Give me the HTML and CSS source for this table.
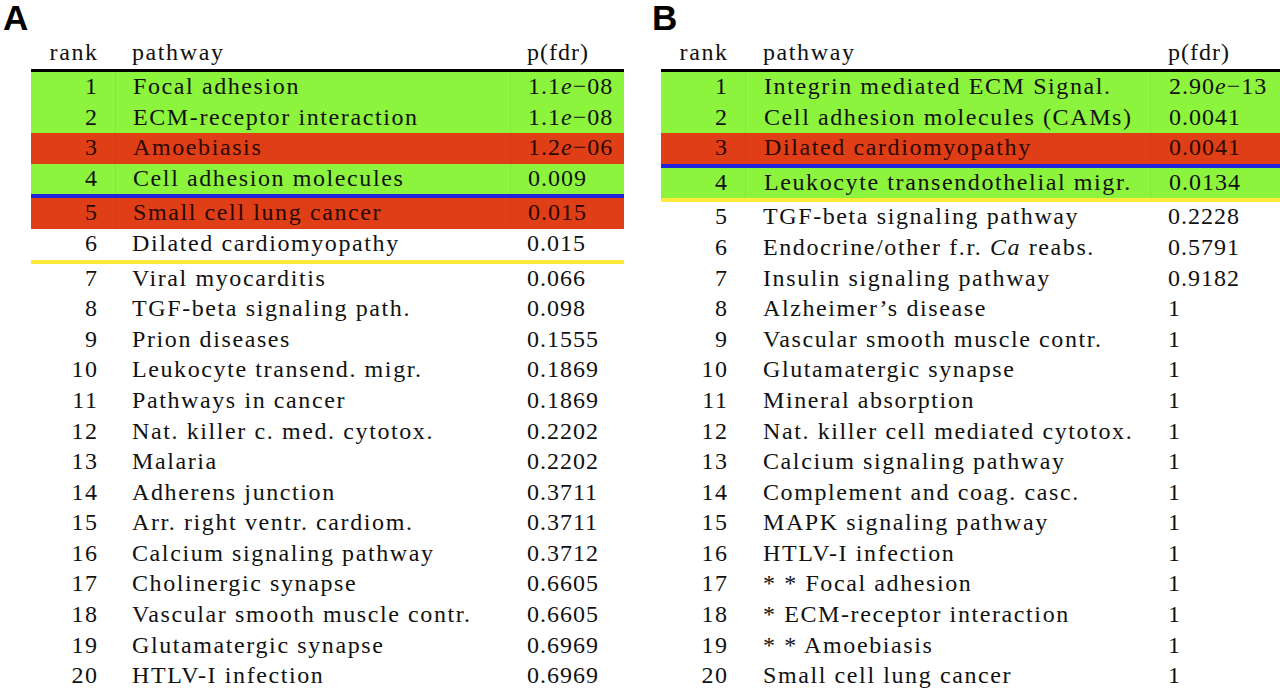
FILE: index.html
```html
<!DOCTYPE html>
<html>
<head>
<meta charset="utf-8">
<link rel="stylesheet" href="styles.css">
</head>
<body>
<div class="figure">
  <section class="panel panel-a">
    <div class="label">A</div>
    <div class="table">
      <div class="row head"><div class="c-rank">rank</div><div class="c-path">pathway</div><div class="c-p">p(fdr)</div></div>
      <div class="row green"><div class="c-rank">1</div><div class="c-path">Focal adhesion</div><div class="c-p">1.1<i>e</i>−08</div></div>
      <div class="row green"><div class="c-rank">2</div><div class="c-path">ECM-receptor interaction</div><div class="c-p">1.1<i>e</i>−08</div></div>
      <div class="row red"><div class="c-rank">3</div><div class="c-path">Amoebiasis</div><div class="c-p">1.2<i>e</i>−06</div></div>
      <div class="row green"><div class="c-rank">4</div><div class="c-path">Cell adhesion molecules</div><div class="c-p">0.009</div></div>
      <div class="sep blue"></div>
      <div class="row red"><div class="c-rank">5</div><div class="c-path">Small cell lung cancer</div><div class="c-p">0.015</div></div>
      <div class="row"><div class="c-rank">6</div><div class="c-path">Dilated cardiomyopathy</div><div class="c-p">0.015</div></div>
      <div class="sep yellow"></div>
      <div class="row"><div class="c-rank">7</div><div class="c-path">Viral myocarditis</div><div class="c-p">0.066</div></div>
      <div class="row"><div class="c-rank">8</div><div class="c-path">TGF-beta signaling path.</div><div class="c-p">0.098</div></div>
      <div class="row"><div class="c-rank">9</div><div class="c-path">Prion diseases</div><div class="c-p">0.1555</div></div>
      <div class="row"><div class="c-rank">10</div><div class="c-path">Leukocyte transend. migr.</div><div class="c-p">0.1869</div></div>
      <div class="row"><div class="c-rank">11</div><div class="c-path">Pathways in cancer</div><div class="c-p">0.1869</div></div>
      <div class="row"><div class="c-rank">12</div><div class="c-path">Nat. killer c. med. cytotox.</div><div class="c-p">0.2202</div></div>
      <div class="row"><div class="c-rank">13</div><div class="c-path">Malaria</div><div class="c-p">0.2202</div></div>
      <div class="row"><div class="c-rank">14</div><div class="c-path">Adherens junction</div><div class="c-p">0.3711</div></div>
      <div class="row"><div class="c-rank">15</div><div class="c-path">Arr. right ventr. cardiom.</div><div class="c-p">0.3711</div></div>
      <div class="row"><div class="c-rank">16</div><div class="c-path">Calcium signaling pathway</div><div class="c-p">0.3712</div></div>
      <div class="row"><div class="c-rank">17</div><div class="c-path">Cholinergic synapse</div><div class="c-p">0.6605</div></div>
      <div class="row"><div class="c-rank">18</div><div class="c-path">Vascular smooth muscle contr.</div><div class="c-p">0.6605</div></div>
      <div class="row"><div class="c-rank">19</div><div class="c-path">Glutamatergic synapse</div><div class="c-p">0.6969</div></div>
      <div class="row"><div class="c-rank">20</div><div class="c-path">HTLV-I infection</div><div class="c-p">0.6969</div></div>
    </div>
  </section>
  <section class="panel panel-b">
    <div class="label">B</div>
    <div class="table">
      <div class="row head"><div class="c-rank">rank</div><div class="c-path">pathway</div><div class="c-p">p(fdr)</div></div>
      <div class="row green"><div class="c-rank">1</div><div class="c-path">Integrin mediated ECM Signal.</div><div class="c-p">2.90<i>e</i>−13</div></div>
      <div class="row green"><div class="c-rank">2</div><div class="c-path">Cell adhesion molecules (CAMs)</div><div class="c-p">0.0041</div></div>
      <div class="row red"><div class="c-rank">3</div><div class="c-path">Dilated cardiomyopathy</div><div class="c-p">0.0041</div></div>
      <div class="sep blue"></div>
      <div class="row green"><div class="c-rank">4</div><div class="c-path">Leukocyte transendothelial migr.</div><div class="c-p">0.0134</div></div>
      <div class="sep yellow"></div>
      <div class="row"><div class="c-rank">5</div><div class="c-path">TGF-beta signaling pathway</div><div class="c-p">0.2228</div></div>
      <div class="row"><div class="c-rank">6</div><div class="c-path">Endocrine/other f.r. <i>Ca</i> reabs.</div><div class="c-p">0.5791</div></div>
      <div class="row"><div class="c-rank">7</div><div class="c-path">Insulin signaling pathway</div><div class="c-p">0.9182</div></div>
      <div class="row"><div class="c-rank">8</div><div class="c-path">Alzheimer’s disease</div><div class="c-p">1</div></div>
      <div class="row"><div class="c-rank">9</div><div class="c-path">Vascular smooth muscle contr.</div><div class="c-p">1</div></div>
      <div class="row"><div class="c-rank">10</div><div class="c-path">Glutamatergic synapse</div><div class="c-p">1</div></div>
      <div class="row"><div class="c-rank">11</div><div class="c-path">Mineral absorption</div><div class="c-p">1</div></div>
      <div class="row"><div class="c-rank">12</div><div class="c-path">Nat. killer cell mediated cytotox.</div><div class="c-p">1</div></div>
      <div class="row"><div class="c-rank">13</div><div class="c-path">Calcium signaling pathway</div><div class="c-p">1</div></div>
      <div class="row"><div class="c-rank">14</div><div class="c-path">Complement and coag. casc.</div><div class="c-p">1</div></div>
      <div class="row"><div class="c-rank">15</div><div class="c-path">MAPK signaling pathway</div><div class="c-p">1</div></div>
      <div class="row"><div class="c-rank">16</div><div class="c-path">HTLV-I infection</div><div class="c-p">1</div></div>
      <div class="row"><div class="c-rank">17</div><div class="c-path">* * Focal adhesion</div><div class="c-p">1</div></div>
      <div class="row"><div class="c-rank">18</div><div class="c-path">* ECM-receptor interaction</div><div class="c-p">1</div></div>
      <div class="row"><div class="c-rank">19</div><div class="c-path">* * Amoebiasis</div><div class="c-p">1</div></div>
      <div class="row"><div class="c-rank">20</div><div class="c-path">Small cell lung cancer</div><div class="c-p">1</div></div>
    </div>
  </section>
</div>
</body>
</html>
```

FILE: styles.css
```css
html, body {
  margin: 0;
  padding: 0;
  background: #ffffff;
}

body {
  width: 1280px;
  height: 692px;
  overflow: hidden;
  color: #111111;
  font-family: "Liberation Serif", "Times New Roman", serif;
}

.figure {
  display: flex;
  align-items: flex-start;
}

.panel {
  display: flex;
  flex-direction: column;
}

.panel-a {
  width: 652px;
}

.panel-b {
  width: 628px;
}

.label {
  font-family: "Liberation Sans", Arial, sans-serif;
  font-weight: 700;
  font-size: 35px;
  line-height: 36px;
  height: 38.4px;
  color: #000000;
}

.panel-a .label {
  padding-left: 3px;
}

.table {
  display: flex;
  flex-direction: column;
}

.panel-a .table {
  margin-left: 31px;
  width: 593px;
}

.panel-b .table {
  margin-left: 9px;
  width: 619px;
}

.row {
  display: flex;
  height: 30.6px;
  font-size: 24px;
  line-height: 28.4px;
  letter-spacing: 1.6px;
  white-space: nowrap;
}

.row.head {
  border-bottom: 3px solid #000000;
}

.row > div {
  height: 100%;
}

.c-rank {
  text-align: right;
  box-sizing: border-box;
}

.c-path,
.c-p {
  box-sizing: border-box;
}

.c-p {
  letter-spacing: 1px;
}

.panel-a .c-rank {
  width: 84px;
  padding-right: 16.4px;
}

.panel-a .c-path {
  width: 395px;
  padding-left: 17px;
}

.panel-a .c-p {
  width: 114px;
  padding-left: 17px;
}

.panel-b .c-rank {
  width: 84px;
  padding-right: 16.4px;
}

.panel-b .c-path {
  width: 405px;
  padding-left: 18px;
}

.panel-b .c-p {
  width: 130px;
  padding-left: 18px;
}

.row.green {
  background: #8cf43c;
}

.row.red {
  background: #e03e17;
  color: #2a0800;
}

.row.green .c-path,
.row.green .c-p,
.row.red .c-path,
.row.red .c-p {
  border-left: 1px solid rgba(0, 0, 0, 0.05);
}

.sep {
  height: 4px;
}

.sep.blue {
  background: #2323dc;
}

.sep.yellow {
  background: #ffe93a;
}
```
